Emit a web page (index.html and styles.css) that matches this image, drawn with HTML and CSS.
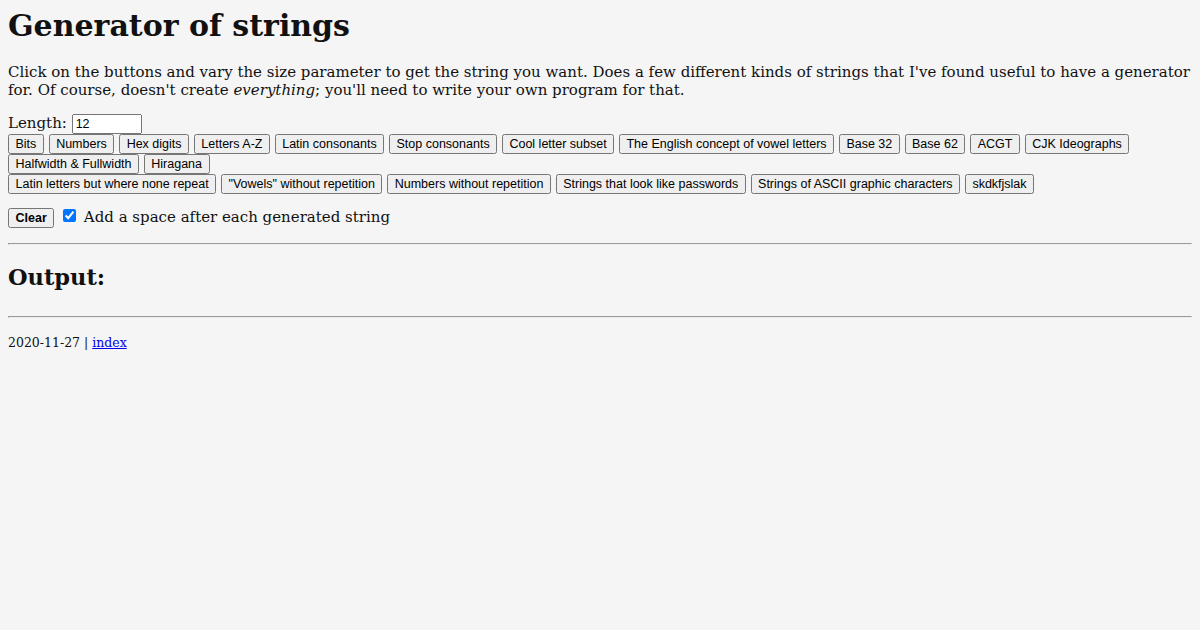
FILE: index.html
```html
<!DOCTYPE html>
<html>
<head>
<meta charset="utf-8">
<title>Generator of strings</title>
<link rel="stylesheet" href="styles.css">
</head>
<body>
<h1>Generator of strings</h1>
<p>Click on the buttons and vary the size parameter to get the string you want. Does a few different kinds of strings that I've found useful to have a generator for. Of course, doesn't create <em>everything</em>; you'll need to write your own program for that.</p>
<div class="length">Length: <input class="num" type="text" value="12"></div>
<div class="buttons">
<button>Bits</button>
<button>Numbers</button>
<button>Hex digits</button>
<button>Letters A-Z</button>
<button>Latin consonants</button>
<button>Stop consonants</button>
<button>Cool letter subset</button>
<button>The English concept of vowel letters</button>
<button>Base 32</button>
<button>Base 62</button>
<button>ACGT</button>
<button>CJK Ideographs</button>
<button>Halfwidth &amp; Fullwidth</button>
<button>Hiragana</button>
</div>
<div class="buttons">
<button>Latin letters but where none repeat</button>
<button>"Vowels" without repetition</button>
<button>Numbers without repetition</button>
<button>Strings that look like passwords</button>
<button>Strings of ASCII graphic characters</button>
<button>skdkfjslak</button>
</div>
<p class="controls"><button class="clear">Clear</button> <input type="checkbox" checked> Add a space after each generated string</p>
<hr>
<h2 class="out-title">Output:</h2>
<div class="output"></div>
<hr>
<p class="footer">2020-11-27 | <a href="#">index</a></p>
</body>
</html>
```
FILE: styles.css
```css
html {
  background: #f5f5f5;
}
body {
  margin: 8px;
  font-family: "DejaVu Serif", serif;
  font-size: 15px;
  color: #111;
}
h1 {
  margin-top: 0;
}
button, input {
  font-family: "Liberation Sans", Arial, sans-serif;
  font-size: 12.5px;
}
button {
  padding: 1px 5.5px;
}
.num {
  width: 62px;
}
.controls {
  margin-top: 12px;
  margin-bottom: 15px;
}
.clear {
  font-weight: bold;
}
.out-title {
  margin-bottom: 26px;
}
.footer {
  font-size: 12.5px;
  margin-top: 17px;
}
```
